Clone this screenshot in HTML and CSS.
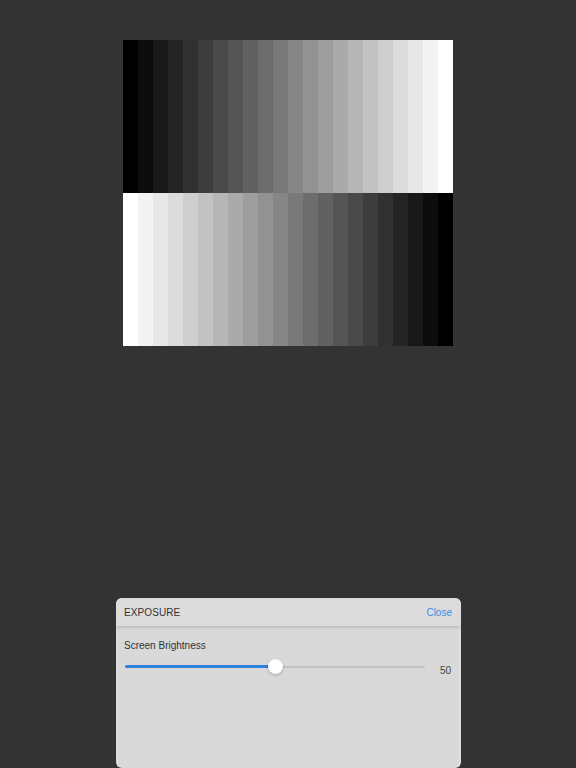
FILE: index.html
```html
<!DOCTYPE html>
<html>
<head>
<meta charset="utf-8">
<link rel="stylesheet" href="styles.css">
</head>
<body>
<div class="screen">
  <div class="chart">
    <div class="row row-up"></div>
    <div class="row row-down"></div>
  </div>
  <div class="spacer"></div>
  <div class="panel">
    <div class="panel-header">
      <span class="title">EXPOSURE</span>
      <span class="close">Close</span>
    </div>
    <div class="panel-body">
      <div class="label">Screen Brightness</div>
      <div class="slider-row">
        <div class="slider">
          <div class="track"></div>
          <div class="fill"></div>
          <div class="thumb"></div>
        </div>
        <span class="value">50</span>
      </div>
    </div>
  </div>
</div>
<script>
(function () {
  var rows = document.querySelectorAll('.row');
  for (var r = 0; r < rows.length; r++) {
    for (var i = 0; i < 22; i++) {
      var k = r === 0 ? i : 21 - i;
      var v = Math.round(k * 255 / 21);
      var s = document.createElement('div');
      s.className = 'step';
      s.style.background = 'rgb(' + v + ',' + v + ',' + v + ')';
      rows[r].appendChild(s);
    }
  }
})();
</script>
</body>
</html>
```

FILE: styles.css
```css
html, body {
  margin: 0;
  padding: 0;
  background: #333333;
  font-family: "Liberation Sans", Arial, sans-serif;
}
.screen {
  height: 768px;
  display: flex;
  flex-direction: column;
  align-items: center;
}
.chart {
  margin-top: 40px;
  width: 330px;
  display: flex;
  flex-direction: column;
}
.row {
  height: 153px;
  display: flex;
}
.step {
  flex: 1;
}
.spacer {
  flex: 1;
}
.panel {
  width: 345px;
  height: 170px;
  background: #d9d9d9;
  border-radius: 6px;
  display: flex;
  flex-direction: column;
  overflow: hidden;
  margin-left: 1px;
}
.panel-header {
  height: 28px;
  background: #dcdcdc;
  display: flex;
  align-items: center;
  justify-content: space-between;
  padding: 0 9px 0 8px;
  box-shadow: 0 1px 4px rgba(0, 0, 0, 0.2);
  position: relative;
  z-index: 1;
  font-size: 10px;
}
.title {
  color: #333;
  letter-spacing: 0.1px;
}
.close {
  color: #3a8ee6;
}
.panel-body {
  flex: 1;
  margin: 0 2px;
  box-shadow: -1px 0 0 #e2e2e2, 1px 0 0 #e2e2e2;
  padding: 14px 8px 0 6px;
}
.label {
  font-size: 10px;
  color: #333;
}
.slider-row {
  display: flex;
  align-items: center;
  margin-top: 6px;
}
.slider {
  position: relative;
  width: 300px;
  height: 16px;
  margin-left: 1px;
}
.track {
  position: absolute;
  left: 0;
  right: 0;
  top: 7px;
  height: 2px;
  background: #c2c2c2;
  border-radius: 1px;
}
.fill {
  position: absolute;
  left: 0;
  width: 150px;
  top: 6.5px;
  height: 3px;
  background: #2f7fdc;
  border-radius: 1.5px;
}
.thumb {
  position: absolute;
  left: 143px;
  top: 0;
  width: 15px;
  height: 15px;
  border-radius: 50%;
  background: #fff;
  box-shadow: 0 1px 3px rgba(0, 0, 0, 0.25);
}
.value {
  margin-left: auto;
  font-size: 10px;
  color: #444;
  margin-top: 8px;
}
```
